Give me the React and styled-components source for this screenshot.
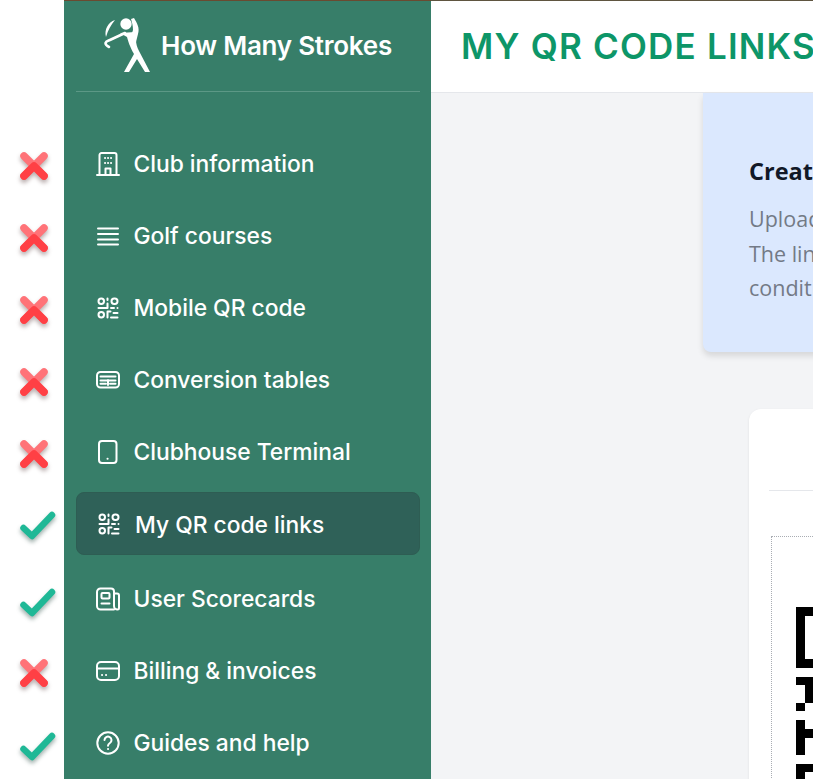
import React from 'react';
import styled, { createGlobalStyle } from 'styled-components';

const GlobalStyle = createGlobalStyle`
    html, body {
        margin: 0;
        height: 100%;
        background: #fff;
        overflow: hidden;
    }
    * { box-sizing: border-box; }
`;

const Page = styled.div`
    display: grid;
    grid-template-columns: 64px 367px 1fr;
    height: 100vh;
    overflow: hidden;
    font-family: Inter, "Liberation Sans", sans-serif;
`;

const Gutter = styled.div`
    display: flex;
    flex-direction: column;
    padding: 130px 0 0 4px;
`;

const MarkRow = styled.div`
    display: flex;
    align-items: center;
    justify-content: center;
    height: ${p => (p.$active ? 63 : 72)}px;
    margin: ${p => (p.$active ? '3px 0 9px' : 0)};
`;

const Sidebar = styled.aside`
    background: #377e69;
    border-top: 1px solid #6a4a30;
    color: #fff;
    display: flex;
    flex-direction: column;
    padding: 0 11px 0 12px;
`;

const Brand = styled.div`
    display: flex;
    align-items: flex-start;
    height: 91px;
    padding: 13px 0 0 28px;
    border-bottom: 1px solid #5c9886;
`;

const BrandName = styled.span`
    font-size: 26px;
    font-weight: 600;
    letter-spacing: -0.25px;
    margin: 16px 0 0 1px;
`;

const Nav = styled.nav`
    display: flex;
    flex-direction: column;
    padding-top: 37px;
`;

const NavItem = styled.a`
    display: flex;
    align-items: center;
    gap: ${p => (p.$active ? 14 : 13.5)}px;
    height: ${p => (p.$active ? 63 : 72)}px;
    margin: ${p => (p.$active ? '3px 0 9px' : 0)};
    padding: ${p => (p.$active ? '1px 0 0 20px' : '0 0 3px 20px')};
    border-radius: 8px;
    background: ${p => (p.$active ? '#2f6158' : 'transparent')};
    border: ${p => (p.$active ? '1px solid #2e5d53' : 'none')};
    font-size: 22.8px;
    font-weight: 500;
    white-space: nowrap;
`;

const Main = styled.main`
    display: flex;
    flex-direction: column;
    min-width: 0;
    background: #f3f4f6;
    overflow: hidden;
`;

const TopBar = styled.header`
    height: 93px;
    flex-shrink: 0;
    background: #fff;
    border-top: 1px solid #5f5540;
    border-bottom: 1px solid #e5e7eb;
    padding: 23px 0 0 30px;
`;

const Title = styled.h1`
    margin: 0;
    font-size: 35px;
    font-weight: 600;
    line-height: 44px;
    letter-spacing: 1.2px;
    color: #0d9668;
    white-space: nowrap;
`;

const Content = styled.div`
    display: flex;
    flex-direction: column;
    width: 1000px;
    margin-left: 272px;
    font-family: "Open Sans", "Noto Sans", sans-serif;
`;

const InfoCard = styled.section`
    height: 259px;
    padding: 62px 46px 0;
    background: #dbe8fe;
    border-radius: 0 0 8px 8px;
    box-shadow: 0 4px 6px rgba(0, 0, 0, 0.12);
`;

const InfoTitle = styled.h2`
    margin: 0 0 15px;
    font-size: 23.5px;
    font-weight: 700;
    line-height: 32px;
    color: #111827;
`;

const InfoLine = styled.p`
    margin: 0;
    font-size: 21.5px;
    line-height: 34.5px;
    color: #737a86;
    white-space: nowrap;
`;

const LinkCard = styled.section`
    margin: 57px 0 0 46px;
    padding: 0 20px;
    background: #fff;
    border-radius: 12px;
    box-shadow: 0 1px 3px rgba(0, 0, 0, 0.08);
`;

const LinkHead = styled.div`
    height: 82px;
    border-bottom: 1px solid #e5e7eb;
`;

const QrFrame = styled.div`
    width: 400px;
    margin: 45px 0 0 2px;
    padding: 70px 24px 40px;
    border: 1px dotted #a9adb3;
`;

const QrCode = styled.svg`
    display: block;
`;

const CheckSvg = styled.svg`
    margin: 3px 0 0 7px;
    filter: drop-shadow(0 3px 2px rgba(20, 60, 50, 0.4));
`;

const CrossSvg = styled.svg`
    filter: drop-shadow(0 3px 2px rgba(60, 30, 30, 0.35));
`;

const GlyphSvg = styled.svg`
    flex-shrink: 0;
`;

function Glyph({ children }) {
    return (
        <GlyphSvg width="24" height="24" viewBox="0 0 24 24" fill="none" stroke="#fff" strokeWidth="2" strokeLinecap="round" strokeLinejoin="round">
            {children}
        </GlyphSvg>
    );
}

const QrGlyph = () => (
    <Glyph>
        <rect x="2.5" y="2.5" width="5.5" height="5.5" rx="2.7" />
        <rect x="15.5" y="2.5" width="6" height="5.5" rx="2.7" />
        <rect x="2.5" y="16" width="5.5" height="5.5" rx="2.7" />
        <path d="M11.5 2.5v1.5M11.5 7.5v4.5H2.5M15 12h3M21.5 12v.1M11.5 15.5v6M11.5 15.5h3M17.5 17h4M15 21.5h6.5" />
    </Glyph>
);

const items = [
    {
        label: 'Club information',
        mark: 'no',
        icon: (
            <Glyph>
                <path d="M3.5 23V3a2 2 0 0 1 2-2h13a2 2 0 0 1 2 2v20M1 23h22M9.5 23v-6.5h5V23" />
                <path d="M9 6h.1M15 6h.1M9 11h.1M15 11h.1M12 6h.1M12 11h.1" />
            </Glyph>
        ),
    },
    {
        label: 'Golf courses',
        mark: 'no',
        icon: (
            <Glyph>
                <path d="M2 4.5h20M2 10h20M2 15.5h20M2 20.5h20" />
            </Glyph>
        ),
    },
    { label: 'Mobile QR code', mark: 'no', icon: <QrGlyph /> },
    {
        label: 'Conversion tables',
        mark: 'no',
        icon: (
            <Glyph>
                <rect x="1" y="4" width="22" height="15.5" rx="3.5" />
                <path d="M4.5 8.5h15M4.5 12.5h15M4.5 15.8h5.5M14 15.8h5.5M12 12v5" />
            </Glyph>
        ),
    },
    {
        label: 'Clubhouse Terminal',
        mark: 'no',
        icon: (
            <Glyph>
                <rect x="3" y="1" width="17.5" height="22" rx="3" />
                <path d="M11.5 18.8h.1" />
            </Glyph>
        ),
    },
    { label: 'My QR code links', mark: 'yes', active: true, icon: <QrGlyph /> },
    {
        label: 'User Scorecards',
        mark: 'yes',
        icon: (
            <Glyph>
                <path d="M18 22.5H4.5A3.5 3.5 0 0 1 1 19V5a3.5 3.5 0 0 1 3.5-3.5H15A3 3 0 0 1 18 4.5V19a3.5 3.5 0 0 0 3.5 3.5 1.5 1.5 0 0 0 1.5-1.5V8.5a2 2 0 0 0-2-2h-3" />
                <rect x="5.5" y="6" width="8" height="5.5" rx="1" />
                <path d="M5.5 16.5h8" />
            </Glyph>
        ),
    },
    {
        label: 'Billing & invoices',
        mark: 'no',
        icon: (
            <Glyph>
                <rect x="1" y="3" width="22" height="18" rx="4" />
                <path d="M1 9.5h22M6 16h.1M10 16h.1" />
            </Glyph>
        ),
    },
    {
        label: 'Guides and help',
        mark: 'yes',
        icon: (
            <Glyph>
                <circle cx="12" cy="12" r="10.7" />
                <path d="M8.5 9a3.5 3.5 0 1 1 5.4 3c-1.2.8-1.9 1.4-1.9 2.8M12 18h.1" />
            </Glyph>
        ),
    },
];

function CrossMark() {
    return (
        <CrossSvg width="32" height="32" viewBox="0 0 32 32">
            <path d="M6 26L26 6" stroke="#ff7378" strokeWidth="7.5" strokeLinecap="round" />
            <path d="M6 6L26 26" stroke="#ff7378" strokeWidth="7.5" strokeLinecap="round" />
            <path d="M16 16L26 26M16 16L6 26" stroke="#ff4045" strokeWidth="7.5" strokeLinecap="round" />
        </CrossSvg>
    );
}

function CheckMark() {
    return (
        <CheckSvg width="36" height="32" viewBox="0 0 36 32">
            <path d="M3.5 18L12 26L32 5" fill="none" stroke="#1fb896" strokeWidth="6.5" strokeLinecap="round" strokeLinejoin="round" />
        </CheckSvg>
    );
}

function GolferLogo() {
    return (
        <svg width="56" height="62" viewBox="14 4 56 62" fill="#fff">
            <circle cx="36" cy="14" r="5.7" />
            <path d="M25 10C18 12 14 20 16 27C18 20 21 15 25 10Z" />
            <path d="M35 23L21 29.5C18 31 16 31 15.5 33C15.5 35 17 36 19 37" fill="none" stroke="#fff" strokeWidth="2.6" strokeLinecap="round" />
            <path d="M44 8C47 13 50 18 48 24L46 32L41 26L43 20C43 16 42 12 41 9Z" />
            <path d="M30 23L45 22L46 30C46 34 47 37 49 41L60 62H55L47 49L39 62H34L44 44C40 37 38 31 37 27Z" />
        </svg>
    );
}

// modules of the part of the code that is visible, [column, row, width, height]
const qrModules = [
    [0, 0, 7, 1], [0, 6, 7, 1], [0, 0, 1, 7], [6, 0, 1, 7], [2, 2, 3, 3],
    [0, 8, 2, 1], [1, 9, 1, 2], [0, 11, 1, 1], [2, 9, 1, 1],
    [0, 13, 1, 4], [1, 14, 1, 1], [2, 14, 1, 1],
    [0, 18, 4, 1], [0, 19, 1, 3],
];

export default function App() {
    return (
        <Page>
            <GlobalStyle />
            <Gutter>
                {items.map(item => (
                    <MarkRow key={item.label} $active={item.active}>
                        {item.mark === 'yes' ? <CheckMark /> : <CrossMark />}
                    </MarkRow>
                ))}
            </Gutter>
            <Sidebar>
                <Brand>
                    <GolferLogo />
                    <BrandName>How Many Strokes</BrandName>
                </Brand>
                <Nav>
                    {items.map(item => (
                        <NavItem key={item.label} $active={item.active}>
                            {item.icon}
                            {item.label}
                        </NavItem>
                    ))}
                </Nav>
            </Sidebar>
            <Main>
                <TopBar>
                    <Title>MY QR CODE LINKS</Title>
                </TopBar>
                <Content>
                    <InfoCard>
                        <InfoTitle>Create your own QR code links</InfoTitle>
                        <InfoLine>Upload a document and get a QR code that points to it.</InfoLine>
                        <InfoLine>The link stays the same when the document changes, such as the</InfoLine>
                        <InfoLine>conditions of the course.</InfoLine>
                    </InfoCard>
                    <LinkCard>
                        <LinkHead />
                        <QrFrame>
                            <QrCode width="348" height="348" viewBox="0 0 40 40" shapeRendering="crispEdges">
                                {qrModules.map(([x, y, w, h]) => (
                                    <rect key={`${x}-${y}-${w}`} x={x} y={y} width={w} height={h} fill="#000" />
                                ))}
                            </QrCode>
                        </QrFrame>
                    </LinkCard>
                </Content>
            </Main>
        </Page>
    );
}
